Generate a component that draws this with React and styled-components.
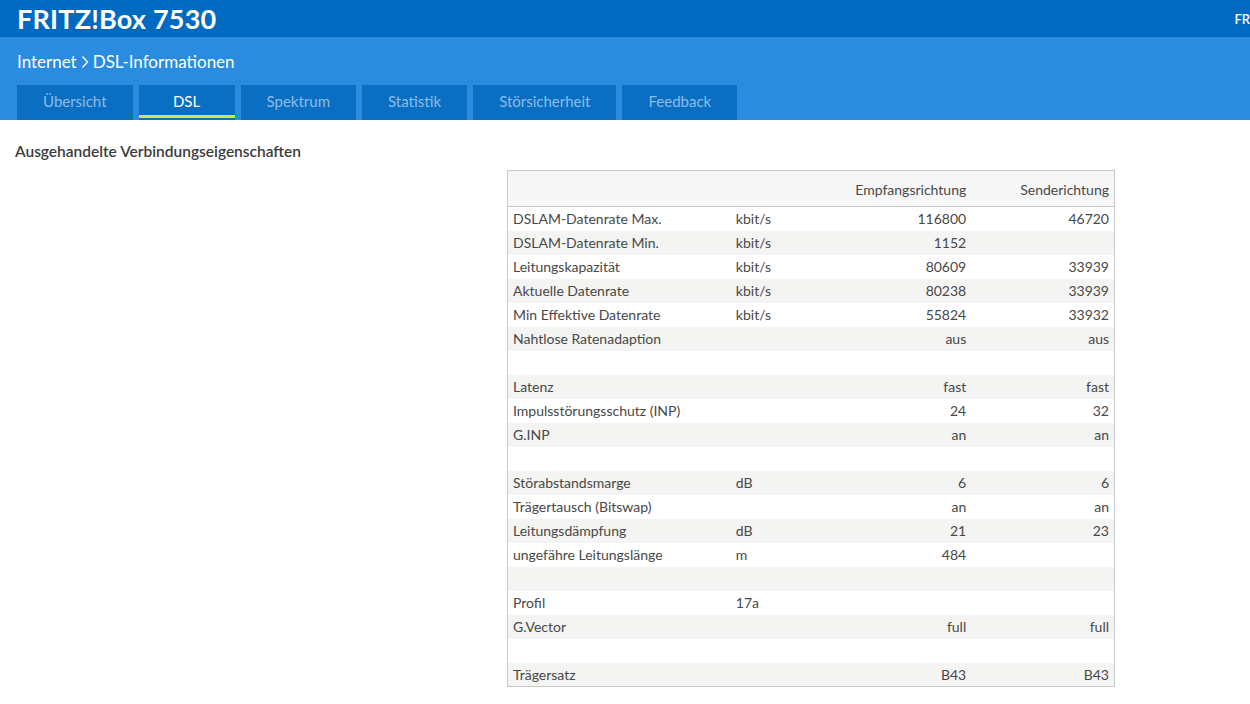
import React from "react";
import styled, { createGlobalStyle } from "styled-components";

const GlobalStyle = createGlobalStyle`
  html, body {
    margin: 0;
    padding: 0;
    background: #ffffff;
    font-family: "Source Sans Pro", Lato, "Noto Sans", sans-serif;
  }
`;

const StyledTopBar = styled.header`
  height: 37px;
  background: #0069c0;
  display: flex;
  align-items: center;
  justify-content: space-between;
  padding: 0 0 0 17px;
  overflow: hidden;
`;

const StyledBrand = styled.h1`
  margin: 0;
  color: #ffffff;
  font-size: 27px;
  font-weight: 700;
  letter-spacing: 0.2px;
`;

const StyledUserHint = styled.span`
  color: #ffffff;
  font-size: 13px;
  font-weight: 600;
  white-space: nowrap;
`;

const StyledNavBand = styled.div`
  background: #2a8cdf;
  padding: 14px 17px 0;
  height: 83px;
  box-sizing: border-box;
  display: flex;
  flex-direction: column;
  justify-content: space-between;
`;

const StyledBreadcrumb = styled.div`
  color: #ffffff;
  font-size: 17px;
  display: flex;
  align-items: center;
  gap: 3px;
`;

const StyledTabs = styled.nav`
  display: flex;
  gap: 6px;
`;

const StyledTab = styled.a`
  position: relative;
  height: 35px;
  min-width: 96px;
  box-sizing: border-box;
  padding: 0 26px 4px;
  display: flex;
  align-items: center;
  justify-content: center;
  background: #0a6fc2;
  color: ${({ $active }) => ($active ? "#ffffff" : "#8dbbe8")};
  font-size: 15px;
  text-decoration: none;
  cursor: pointer;

  &::after {
    content: "";
    position: absolute;
    left: 0;
    right: 0;
    bottom: 2px;
    height: 3px;
    background: ${({ $active }) => ($active ? "#d4e63a" : "transparent")};
  }
`;

const StyledContent = styled.main`
  padding: 22px 15px 20px;
`;

const StyledHeading = styled.h2`
  margin: 0 0 10px;
  font-size: 15.5px;
  font-weight: 600;
  color: #3c3c3c;
`;

const StyledTableWrap = styled.div`
  display: flex;
  justify-content: flex-start;
  padding-left: 492px;
`;

const StyledTable = styled.table`
  width: 608px;
  border-collapse: collapse;
  border: 1px solid #c8c8c8;
  table-layout: fixed;
  font-size: 14px;
  color: #484848;
`;

const StyledHeadRow = styled.tr`
  height: 36px;
  background: #f7f7f7;
  border-bottom: 1px solid #c8c8c8;
`;

const StyledRow = styled.tr`
  height: 24px;
  background: ${({ $striped }) => ($striped ? "#f4f4f2" : "#ffffff")};
`;

const StyledCell = styled.td`
  padding: 0 5px;
  text-align: ${({ $right }) => ($right ? "right" : "left")};
  white-space: nowrap;
  font-weight: 400;
`;

const StyledHeadCell = styled(StyledCell).attrs({ as: "th" })`
  padding-top: 2px;
`;

const tabs = [
  "Übersicht",
  "DSL",
  "Spektrum",
  "Statistik",
  "Störsicherheit",
  "Feedback",
];

const rows = [
  ["DSLAM-Datenrate Max.", "kbit/s", "116800", "46720"],
  ["DSLAM-Datenrate Min.", "kbit/s", "1152", ""],
  ["Leitungskapazität", "kbit/s", "80609", "33939"],
  ["Aktuelle Datenrate", "kbit/s", "80238", "33939"],
  ["Min Effektive Datenrate", "kbit/s", "55824", "33932"],
  ["Nahtlose Ratenadaption", "", "aus", "aus"],
  ["", "", "", ""],
  ["Latenz", "", "fast", "fast"],
  ["Impulsstörungsschutz (INP)", "", "24", "32"],
  ["G.INP", "", "an", "an"],
  ["", "", "", ""],
  ["Störabstandsmarge", "dB", "6", "6"],
  ["Trägertausch (Bitswap)", "", "an", "an"],
  ["Leitungsdämpfung", "dB", "21", "23"],
  ["ungefähre Leitungslänge", "m", "484", ""],
  ["", "", "", ""],
  ["Profil", "17a", "", ""],
  ["G.Vector", "", "full", "full"],
  ["", "", "", ""],
  ["Trägersatz", "", "B43", "B43"],
];

function Chevron() {
  return (
    <svg width="10" height="14" viewBox="0 0 10 14" aria-hidden="true">
      <path d="M2.5 1.5 L7.5 7 L2.5 12.5" fill="none" stroke="#ffffff" strokeWidth="1.3" />
    </svg>
  );
}

export default function App() {
  return (
    <>
      <GlobalStyle />
      <StyledTopBar>
        <StyledBrand>FRITZ!Box 7530</StyledBrand>
        <StyledUserHint>FR</StyledUserHint>
      </StyledTopBar>
      <StyledNavBand>
        <StyledBreadcrumb>
          Internet <Chevron /> DSL-Informationen
        </StyledBreadcrumb>
        <StyledTabs>
          {tabs.map((tab) => (
            <StyledTab key={tab} $active={tab === "DSL"}>
              {tab}
            </StyledTab>
          ))}
        </StyledTabs>
      </StyledNavBand>
      <StyledContent>
        <StyledHeading>Ausgehandelte Verbindungseigenschaften</StyledHeading>
        <StyledTableWrap>
          <StyledTable>
            <colgroup>
              <col style={{ width: 223 }} />
              <col style={{ width: 100 }} />
              <col style={{ width: 140 }} />
              <col style={{ width: 143 }} />
            </colgroup>
            <thead>
              <StyledHeadRow>
                <StyledHeadCell />
                <StyledHeadCell />
                <StyledHeadCell $right>Empfangsrichtung</StyledHeadCell>
                <StyledHeadCell $right>Senderichtung</StyledHeadCell>
              </StyledHeadRow>
            </thead>
            <tbody>
              {rows.map((row, i) => (
                <StyledRow key={i} $striped={i % 2 === 1}>
                  <StyledCell>{row[0]}</StyledCell>
                  <StyledCell>{row[1]}</StyledCell>
                  <StyledCell $right>{row[2]}</StyledCell>
                  <StyledCell $right>{row[3]}</StyledCell>
                </StyledRow>
              ))}
            </tbody>
          </StyledTable>
        </StyledTableWrap>
      </StyledContent>
    </>
  );
}
